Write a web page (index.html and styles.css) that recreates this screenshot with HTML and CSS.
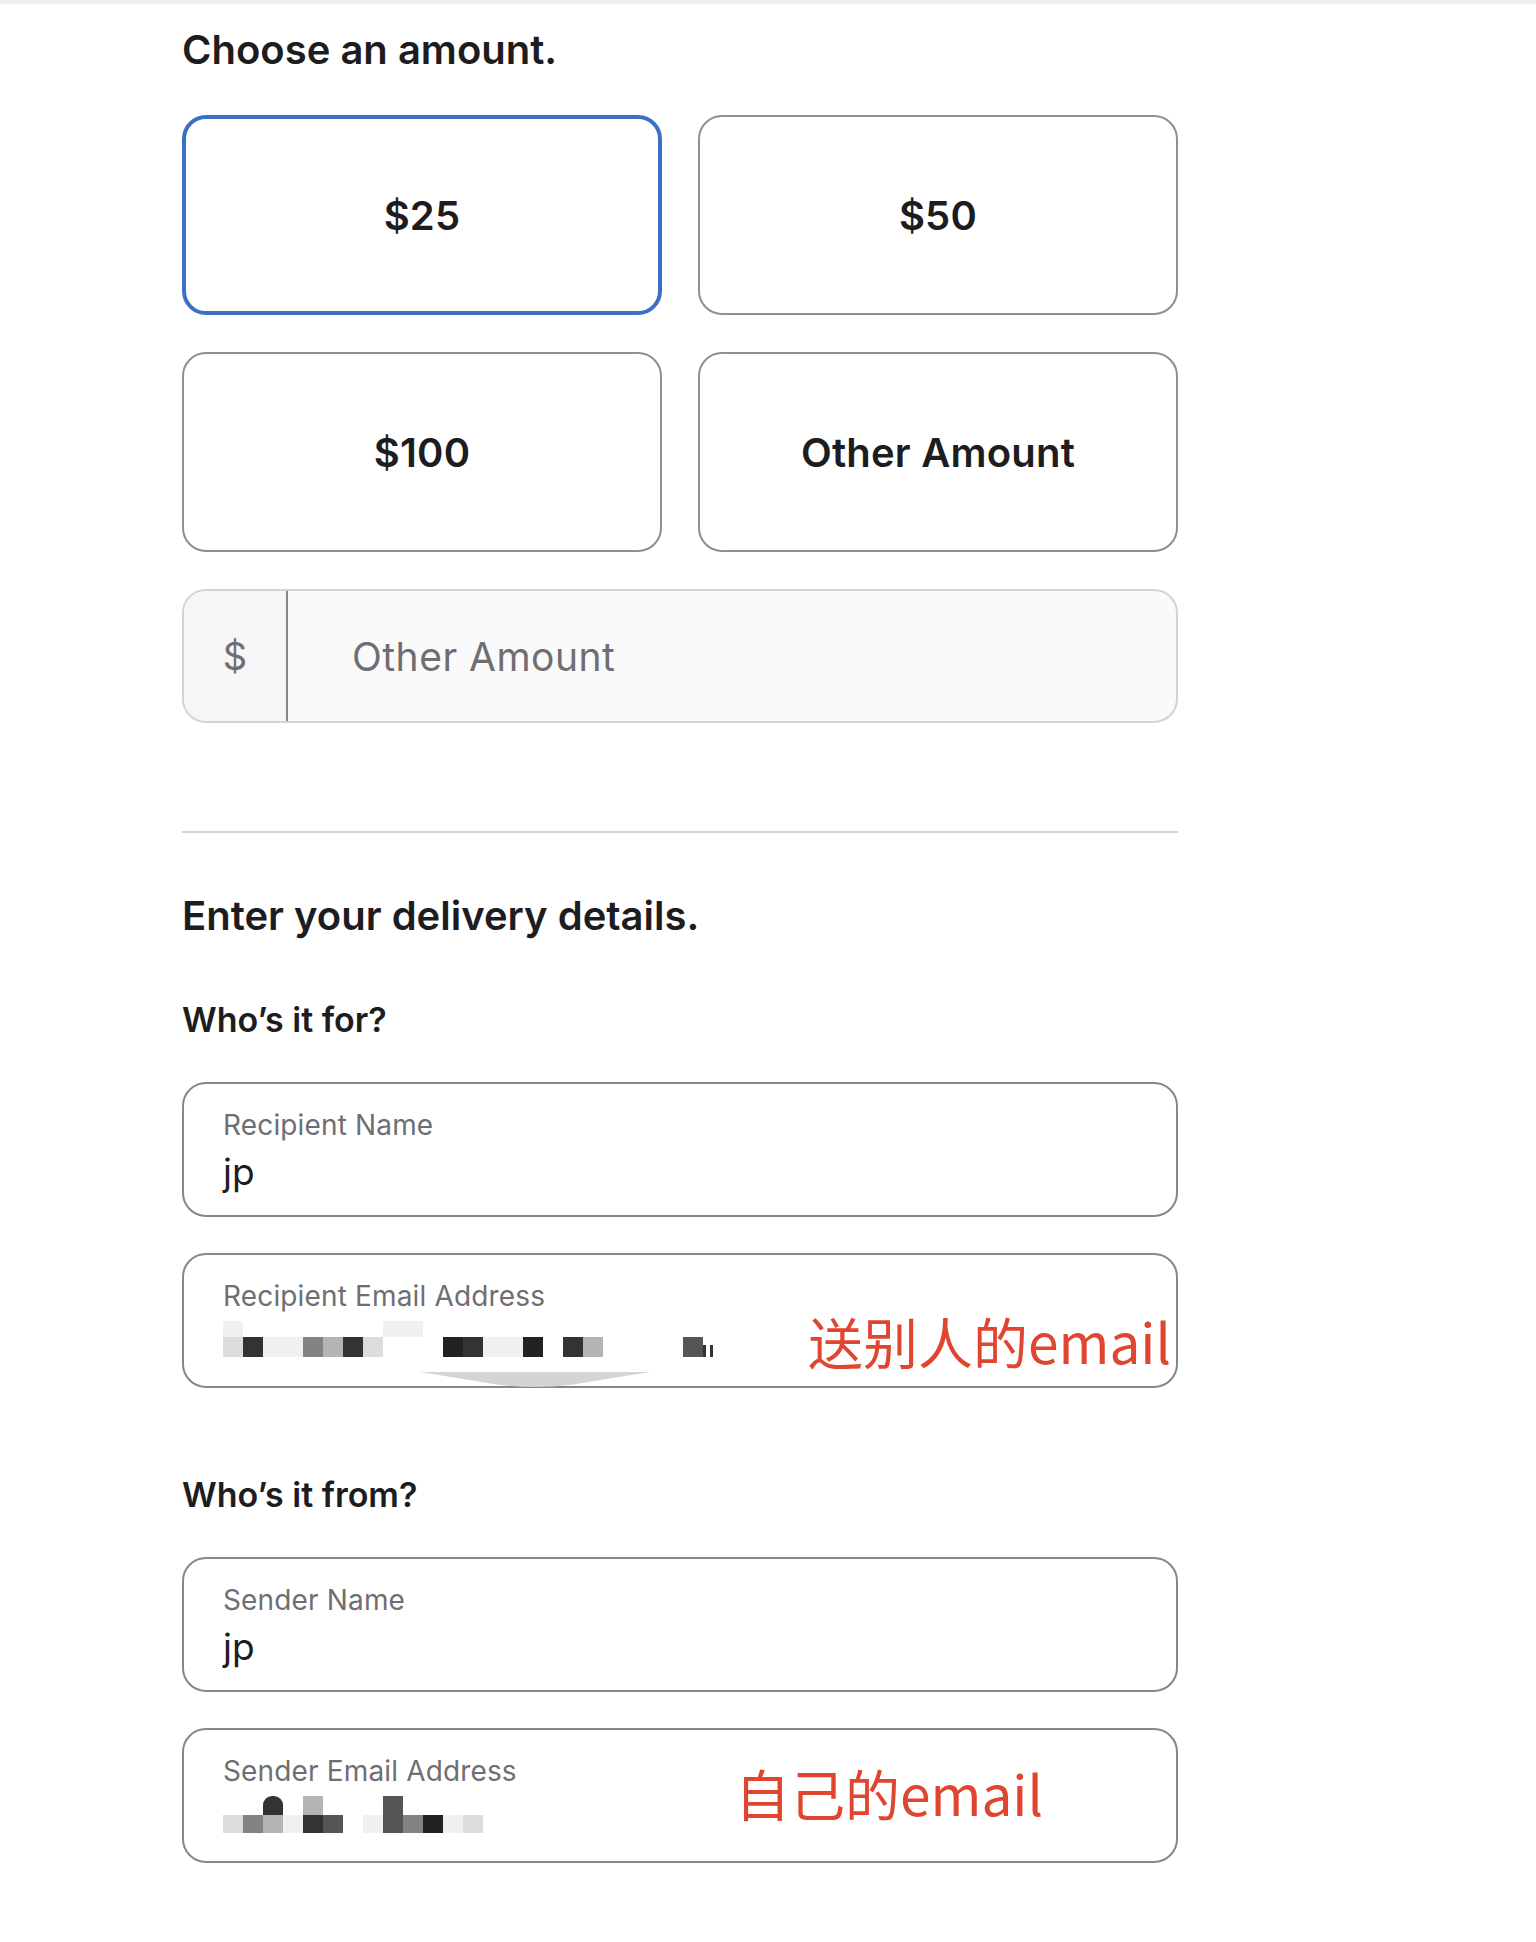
FILE: index.html
```html
<!DOCTYPE html>
<html lang="en">
<head>
<meta charset="utf-8">
<title>Gift Card</title>
<link rel="stylesheet" href="styles.css">
</head>
<body>
<div class="topbar"></div>
<main class="page">
  <h2 class="title">Choose an amount.</h2>
  <div class="amount-grid">
    <div class="amount selected">$25</div>
    <div class="amount">$50</div>
    <div class="amount">$100</div>
    <div class="amount">Other Amount</div>
  </div>
  <div class="other-input">
    <div class="prefix">$</div>
    <div class="placeholder">Other Amount</div>
  </div>
  <div class="divider"></div>

  <h2 class="title delivery">Enter your delivery details.</h2>
  <h3 class="subtitle">Who’s it for?</h3>
  <div class="field first">
    <div class="label">Recipient Name</div>
    <div class="value">jp</div>
  </div>
  <div class="field">
    <div class="label">Recipient Email Address</div>
    <div class="mosaic">
      <div class="mrow upper">
        <span class="c0"></span><span></span><span></span><span></span><span></span><span></span><span></span><span></span><span class="c0"></span><span class="c0"></span>
      </div>
      <div class="mrow">
        <span class="c1"></span><span class="c5"></span><span class="c0"></span><span class="c0"></span><span class="c3"></span><span class="c2"></span><span class="c5"></span><span class="c1"></span><span></span><span></span><span></span><span class="c6"></span><span class="c5"></span><span class="c0"></span><span class="c0"></span><span class="c6"></span><span></span><span class="c5"></span><span class="c2"></span><span></span><span></span><span></span><span></span><span class="c4"></span><span class="tiny"></span>
      </div>
    </div>
    <svg class="smudge" width="230" height="16" viewBox="0 0 230 16"><path d="M0 0 H230 L150 13 Q115 17 80 13 Z" fill="#d4d4d6"/></svg>
    <div class="note recipient-note">送别人的email</div>
  </div>

  <h3 class="subtitle from">Who’s it from?</h3>
  <div class="field first">
    <div class="label">Sender Name</div>
    <div class="value">jp</div>
  </div>
  <div class="field">
    <div class="label">Sender Email Address</div>
    <div class="mosaic sender">
      <div class="mrow upper">
        <span></span><span></span><span class="c5 round"></span><span></span><span class="c2"></span><span></span><span></span><span></span><span class="c4"></span>
      </div>
      <div class="mrow">
        <span class="c1"></span><span class="c3"></span><span class="c2"></span><span class="c0"></span><span class="c5"></span><span class="c4"></span><span></span><span class="c0"></span><span class="c4"></span><span class="c3"></span><span class="c6"></span><span class="c0"></span><span class="c1"></span>
      </div>
    </div>
    <div class="note sender-note">自己的email</div>
  </div>
</main>
</body>
</html>
```

FILE: styles.css
```css
* { box-sizing: border-box; }

html, body {
  margin: 0;
  padding: 0;
  background: #ffffff;
}

body {
  font-family: Inter, "Liberation Sans", sans-serif;
  color: #1d1d1f;
  width: 1536px;
  min-height: 1942px;
}

.topbar {
  height: 4px;
  background: #efeff1;
}

.page {
  margin-left: 182px;
  width: 996px;
  padding-bottom: 60px;
}

.title {
  margin: 22px 0 0;
  font-size: 40px;
  line-height: 48px;
  font-weight: 600;
  letter-spacing: 0;
}

.title.delivery {
  margin-top: 59px;
}

.amount-grid {
  margin-top: 41px;
  display: grid;
  grid-template-columns: 480px 480px;
  column-gap: 36px;
  row-gap: 37px;
}

.amount {
  height: 200px;
  border: 2px solid #8e8e93;
  border-radius: 24px;
  display: flex;
  align-items: center;
  justify-content: center;
  font-size: 40px;
  font-weight: 600;
  letter-spacing: 0.2px;
}

.amount.selected {
  border: 4px solid #3a70c6;
}

.other-input {
  margin-top: 37px;
  height: 134px;
  border: 2px solid #d2d2d7;
  border-radius: 24px;
  background: #fafafa;
  display: flex;
  overflow: hidden;
}

.prefix {
  width: 104px;
  flex: none;
  border-right: 2px solid #86868b;
  background: #f6f6f7;
  display: flex;
  align-items: center;
  justify-content: center;
  font-size: 38px;
  color: #6e6e73;
}

.placeholder {
  display: flex;
  align-items: center;
  padding-left: 64px;
  font-size: 39px;
  color: #6e6e73;
  letter-spacing: 0.5px;
}

.divider {
  margin-top: 108px;
  height: 2px;
  background: #d2d2d7;
}

.subtitle {
  margin: 60px 0 0;
  font-size: 34px;
  line-height: 40px;
  font-weight: 600;
  letter-spacing: 0;
}

.subtitle.from {
  margin-top: 87px;
}

.field {
  position: relative;
  margin-top: 36px;
  height: 135px;
  border: 2px solid #86868b;
  border-radius: 24px;
  padding: 24px 39px 0;
}

.field.first {
  margin-top: 42px;
}

.label {
  font-size: 28px;
  line-height: 34px;
  color: #6e6e73;
  letter-spacing: 0.15px;
}

.value {
  margin-top: 8px;
  font-size: 37px;
  line-height: 43px;
  color: #1d1d1f;
}

.mosaic {
  margin-top: 8px;
  height: 43px;
  display: flex;
  flex-direction: column;
  justify-content: flex-end;
  padding-bottom: 7px;
}

.mosaic.sender {
  padding-bottom: 6px;
}

.mrow {
  display: flex;
  height: 20px;
}

.mosaic.sender .mrow {
  height: 18px;
}

.mosaic.sender .mrow.upper {
  height: 19px;
}

.mrow span {
  width: 20px;
  height: 100%;
  flex: none;
}

.mrow .c0 { background: #f0f0f0; }
.mrow .c1 { background: #dcdcdc; }
.mrow .c2 { background: #b4b4b4; }
.mrow .c3 { background: #838383; }
.mrow .c4 { background: #555555; }
.mrow .c5 { background: #333333; }
.mrow .c6 { background: #222222; }
.mrow .round { border-radius: 9px 9px 0 0; }
.mrow .tiny {
  width: 10px;
  height: 12px;
  margin-top: 8px;
  border-left: 3px solid #333;
  border-right: 3px solid #333;
}

.smudge {
  position: absolute;
  left: 236px;
  bottom: -2px;
}

.note {
  position: absolute;
  font-family: "Noto Sans CJK SC", "Noto Sans", sans-serif;
  font-size: 55px;
  line-height: 1;
  color: #e0452f;
  white-space: nowrap;
}

.recipient-note {
  left: 624px;
  top: 58px;
  background: #ffffff;
}

.sender-note {
  left: 551px;
  top: 35px;
}
```
